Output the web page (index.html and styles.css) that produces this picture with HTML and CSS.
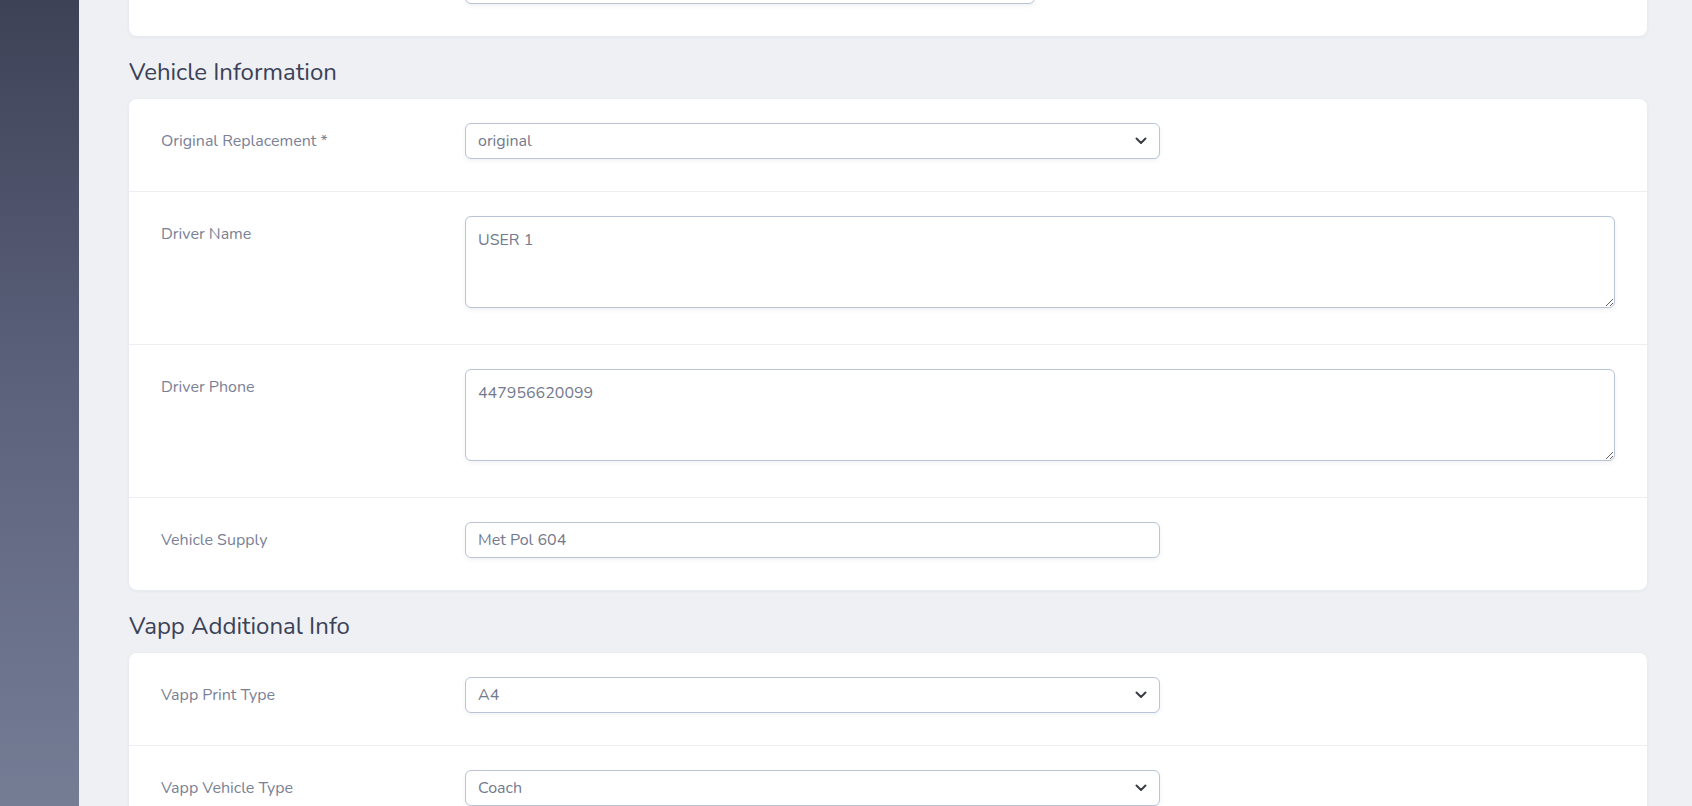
FILE: index.html
```html
<!DOCTYPE html>
<html lang="en">
  <head>
    <meta charset="UTF-8" />
    <meta name="viewport" content="width=device-width, initial-scale=1.0" />
    <title>Booking | Vehicle Information</title>
    <link rel="stylesheet" href="styles.css">
  </head>

  <body>
    <aside class="sidebar"></aside>

    <main class="content">
      <section class="card">
        <div class="form-row">
          <label class="form-label"></label>
          <div class="form-field">
            <input class="form-input short" type="text" value="" />
          </div>
        </div>
      </section>

      <h2 class="section-title">Vehicle Information</h2>
      <section class="card">
        <div class="form-row">
          <label class="form-label">Original Replacement *</label>
          <div class="form-field">
            <div class="select-wrap">
              <select class="form-input">
                <option>original</option>
                <option>replacement</option>
              </select>
              <svg class="chevron" viewBox="0 0 12 8" width="12" height="8">
                <path d="M1.5 1.5 6 6l4.5-4.5" fill="none" stroke="#3a3d45" stroke-width="2" stroke-linecap="round" stroke-linejoin="round" />
              </svg>
            </div>
          </div>
        </div>
        <div class="form-row">
          <label class="form-label">Driver Name</label>
          <div class="form-field">
            <textarea class="form-input textarea">USER 1</textarea>
          </div>
        </div>
        <div class="form-row">
          <label class="form-label">Driver Phone</label>
          <div class="form-field">
            <textarea class="form-input textarea">447956620099</textarea>
          </div>
        </div>
        <div class="form-row">
          <label class="form-label">Vehicle Supply</label>
          <div class="form-field">
            <input class="form-input medium" type="text" value="Met Pol 604" />
          </div>
        </div>
      </section>

      <h2 class="section-title">Vapp Additional Info</h2>
      <section class="card">
        <div class="form-row">
          <label class="form-label">Vapp Print Type</label>
          <div class="form-field">
            <div class="select-wrap">
              <select class="form-input">
                <option>A4</option>
                <option>A5</option>
              </select>
              <svg class="chevron" viewBox="0 0 12 8" width="12" height="8">
                <path d="M1.5 1.5 6 6l4.5-4.5" fill="none" stroke="#3a3d45" stroke-width="2" stroke-linecap="round" stroke-linejoin="round" />
              </svg>
            </div>
          </div>
        </div>
        <div class="form-row">
          <label class="form-label">Vapp Vehicle Type</label>
          <div class="form-field">
            <div class="select-wrap">
              <select class="form-input">
                <option>Coach</option>
                <option>Minibus</option>
              </select>
              <svg class="chevron" viewBox="0 0 12 8" width="12" height="8">
                <path d="M1.5 1.5 6 6l4.5-4.5" fill="none" stroke="#3a3d45" stroke-width="2" stroke-linecap="round" stroke-linejoin="round" />
              </svg>
            </div>
          </div>
        </div>
      </section>
    </main>
  </body>
</html>
```

FILE: styles.css
```css
* {
  padding: 0;
  margin: 0;
  box-sizing: border-box;
}

body {
  display: flex;
  height: 100vh;
  overflow: hidden;
  background: #eef0f4;
  font-family: "Nunito", "Lato", "Noto Sans", sans-serif;
}

.sidebar {
  flex: 0 0 79px;
  background: linear-gradient(180deg, #3d4257 0%, #5a6079 45%, #757d95 100%);
}

/* page is scrolled down a bit, first card is cut at the top */
.content {
  flex: 1;
  padding: 0 45px 0 50px;
  margin-top: -56px;
}

.card {
  background: #fff;
  border-radius: 8px;
  box-shadow: 0 1px 4px rgba(40, 50, 80, 0.06);
}

.section-title {
  font-size: 24px;
  font-weight: 400;
  line-height: 29px;
  color: #3b4157;
  margin: 22px 0 12px;
}

.form-row {
  display: grid;
  grid-template-columns: 304px 1fr;
  padding: 24px 32px 32px;
  border-bottom: 1px solid #eceef2;
}

.form-row:last-child {
  border-bottom: none;
}

.form-label {
  font-size: 16px;
  color: #7a8196;
  line-height: 20px;
  padding-top: 8px;
}

.form-field {
  display: flex;
}

.form-input {
  display: block;
  width: 695px;
  height: 36px;
  padding: 0 12px;
  font-family: inherit;
  font-size: 16px;
  color: #737a8d;
  background: #fff;
  border: 1px solid #b9c4d6;
  border-radius: 6px;
  box-shadow: 0 2px 4px rgba(60, 70, 100, 0.07);
  outline: none;
}

.form-input.short {
  width: 570px;
}

.select-wrap {
  position: relative;
}

.select-wrap select {
  appearance: none;
  -webkit-appearance: none;
}

.chevron {
  position: absolute;
  right: 13px;
  top: 14px;
}

.textarea {
  width: 100%;
  height: 92px;
  padding: 13px 12px;
  margin-bottom: 4px;
  line-height: 20px;
  resize: vertical;
}
```
